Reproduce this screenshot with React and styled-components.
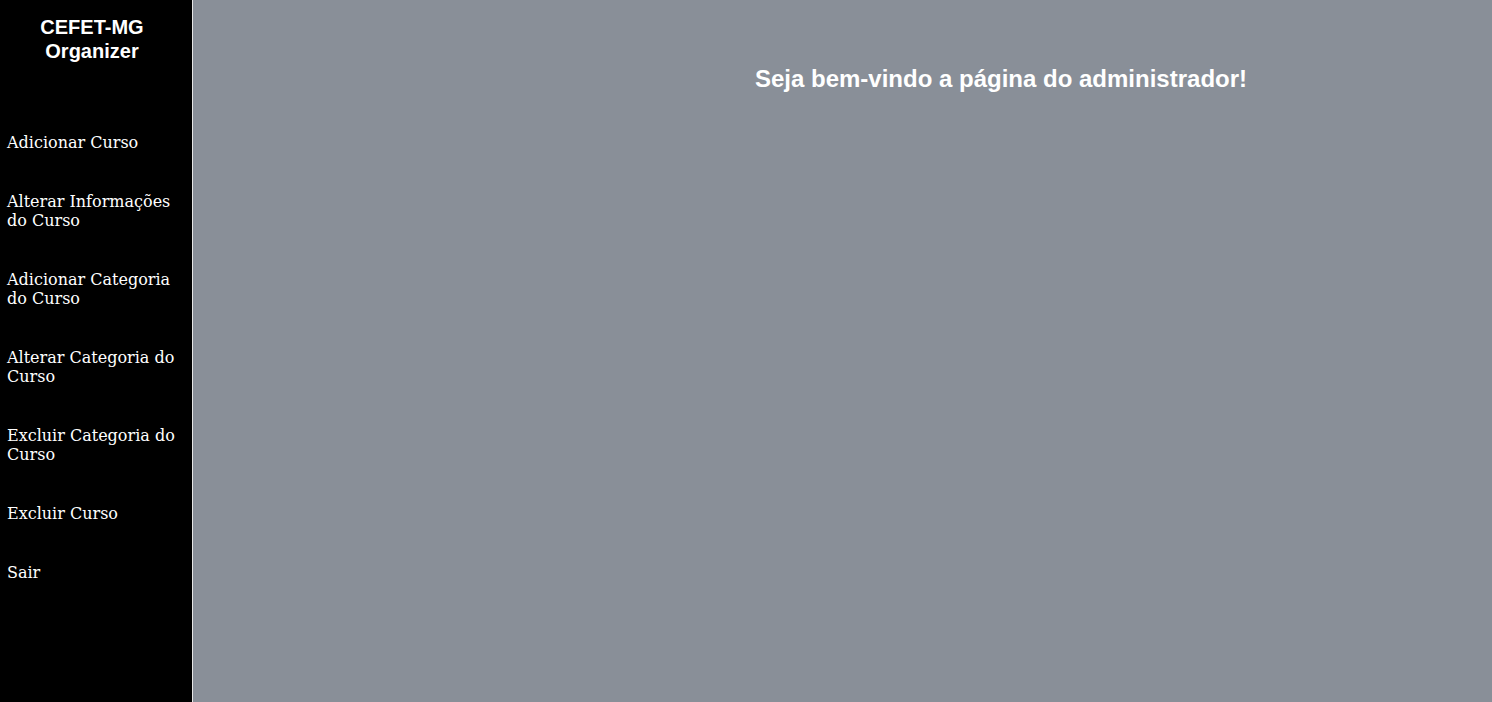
import React from 'react';
import styled, { createGlobalStyle } from 'styled-components';

const GlobalStyle = createGlobalStyle`
  html, body {
    margin: 0;
    padding: 0;
    height: 100%;
  }
  #root {
    height: 100%;
  }
`;

const links = [
  'Adicionar Curso',
  'Alterar Informações do Curso',
  'Adicionar Categoria do Curso',
  'Alterar Categoria do Curso',
  'Excluir Categoria do Curso',
  'Excluir Curso',
  'Sair',
];

const App = () => {
  return (
    <Page>
      <GlobalStyle />
      <Sidebar>
        <Brand>CEFET-MG Organizer</Brand>
        <Nav>
          {links.map((l) => (
            <NavLink key={l} href="#">{l}</NavLink>
          ))}
        </Nav>
      </Sidebar>
      <Main>
        <Title>Seja bem-vindo a página do administrador!</Title>
      </Main>
    </Page>
  );
};

const Page = styled.div`
  display: flex;
  height: 100vh;
  overflow: hidden;
`;

const Sidebar = styled.aside`
  width: 192px;
  flex-shrink: 0;
  background: #000;
  border-right: 1px solid #e6e6e6;
  display: flex;
  flex-direction: column;
`;

const Brand = styled.h2`
  margin: 15px 8px 0 0;
  color: #fff;
  text-align: center;
  font-family: "Liberation Sans", Arial, sans-serif;
  font-weight: bold;
  font-size: 20px;
  line-height: 24px;
`;

const Nav = styled.nav`
  margin-top: 50px;
  display: flex;
  flex-direction: column;
`;

const NavLink = styled.a`
  display: block;
  padding: 20px 8px 20px 7px;
  color: #fff;
  text-decoration: none;
  font-family: "DejaVu Serif", serif;
  font-size: 16px;
  line-height: 19px;
`;

const Main = styled.main`
  flex: 1;
  background: #898f98;
  padding-left: 317px;
`;

const Title = styled.h1`
  margin: 65px 0 0;
  color: #fff;
  text-align: center;
  font-family: "Liberation Sans", Arial, sans-serif;
  font-weight: bold;
  font-size: 24px;
  line-height: 28px;
`;

export default App;
